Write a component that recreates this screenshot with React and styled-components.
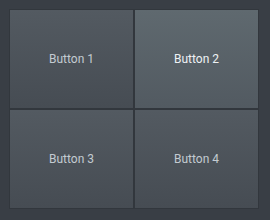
import React from "react";
import styled, { createGlobalStyle } from "styled-components";

const Global = createGlobalStyle`
  html, body {
    margin: 0;
    padding: 0;
    background: #393e45;
    font-family: Roboto, "Liberation Sans", sans-serif;
  }
`;

const Page = styled.div`
  padding: 9px;
`;

const Grid = styled.div`
  width: 248px;
  height: 198px;
  padding: 1px;
  background: #32373d;
  display: grid;
  grid-template-columns: 1fr 1fr;
  grid-template-rows: 1fr 1fr;
  gap: 2px;
`;

const Cell = styled.button`
  border: none;
  padding: 0;
  margin: 0;
  font-family: inherit;
  font-size: 12px;
  color: ${(p) => (p.$active ? "#eef2f5" : "#c3cbd1")};
  background: ${(p) =>
    p.$active
      ? "linear-gradient(to bottom, #5f696f, #525a61)"
      : "linear-gradient(to bottom, #535a61, #464c53)"};
  display: flex;
  align-items: center;
  justify-content: center;
  cursor: pointer;
`;

export default function App() {
  return (
    <Page>
      <Global />
      <Grid>
        <Cell>Button 1</Cell>
        <Cell $active>Button 2</Cell>
        <Cell>Button 3</Cell>
        <Cell>Button 4</Cell>
      </Grid>
    </Page>
  );
}
